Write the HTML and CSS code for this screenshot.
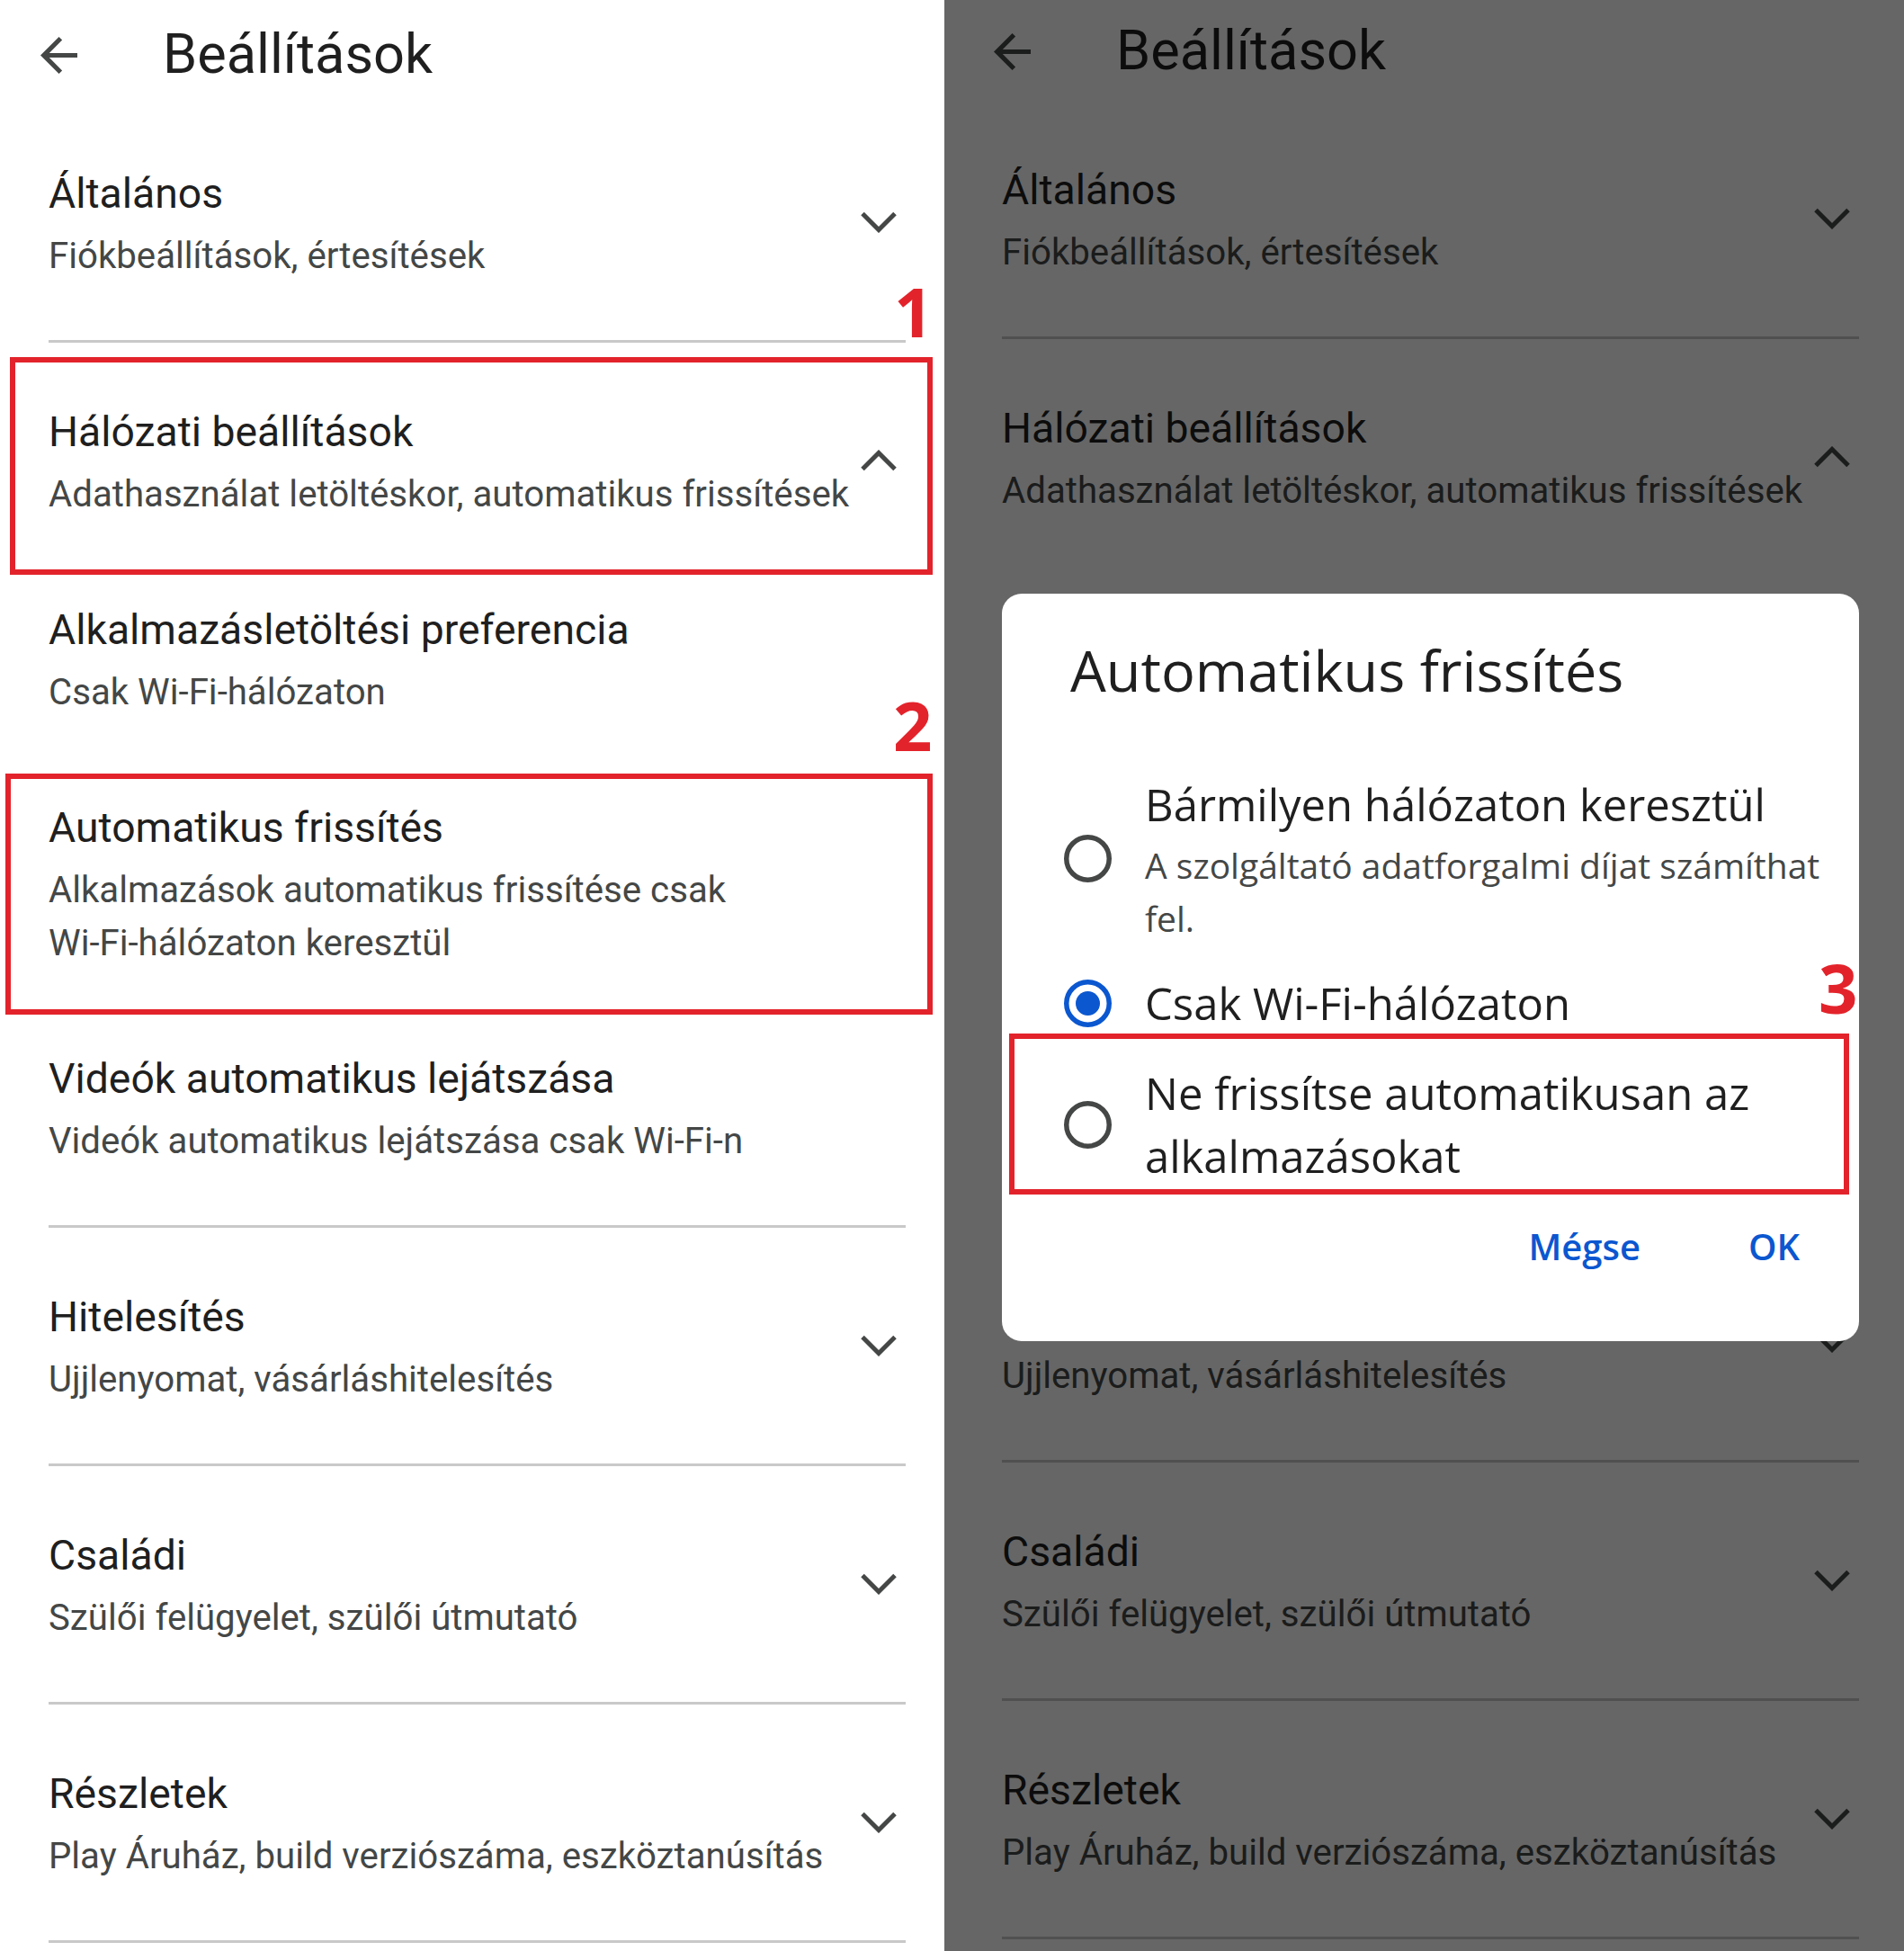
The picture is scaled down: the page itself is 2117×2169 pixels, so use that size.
FILE: index.html
```html
<!DOCTYPE html>
<html lang="hu">
<head>
<meta charset="utf-8">
<title>Beállítások</title>
<link rel="stylesheet" href="styles.css">
</head>
<body>
<div class="screens">

  <div class="panel">
    <div class="page">
      <header class="appbar">
        <svg class="back" viewBox="4 4 16 16"><path d="M20 11H7.83l5.59-5.59L12 4l-8 8 8 8 1.41-1.41L7.83 13H20v-2z"/></svg>
        <h1 class="appbar-title">Beállítások</h1>
      </header>

      <section class="group">
        <div class="row">
          <div class="text">
            <div class="title">Általános</div>
            <div class="sub">Fiókbeállítások, értesítések</div>
          </div>
          <svg class="chev" viewBox="0 0 40 24"><polyline points="2,2.5 20,20.5 38,2.5"/></svg>
        </div>
      </section>
      <div class="divider"></div>

      <section class="group group--open">
        <div class="row">
          <div class="text">
            <div class="title">Hálózati beállítások</div>
            <div class="sub">Adathasználat letöltéskor, automatikus frissítések</div>
          </div>
          <svg class="chev" viewBox="0 0 40 24"><polyline points="2,21.5 20,3.5 38,21.5"/></svg>
        </div>
        <div class="text">
          <div class="title">Alkalmazásletöltési preferencia</div>
          <div class="sub">Csak <span class="nowrap">Wi-Fi-hálózaton</span></div>
        </div>
        <div class="text">
          <div class="title">Automatikus frissítés</div>
          <div class="sub sub--wrap">Alkalmazások automatikus frissítése csak <span class="nowrap">Wi-Fi-hálózaton</span> keresztül</div>
        </div>
        <div class="text">
          <div class="title">Videók automatikus lejátszása</div>
          <div class="sub">Videók automatikus lejátszása csak <span class="nowrap">Wi-Fi-n</span></div>
        </div>
      </section>
      <div class="divider"></div>

      <section class="group">
        <div class="row">
          <div class="text">
            <div class="title">Hitelesítés</div>
            <div class="sub">Ujjlenyomat, vásárláshitelesítés</div>
          </div>
          <svg class="chev" viewBox="0 0 40 24"><polyline points="2,2.5 20,20.5 38,2.5"/></svg>
        </div>
      </section>
      <div class="divider"></div>

      <section class="group">
        <div class="row">
          <div class="text">
            <div class="title">Családi</div>
            <div class="sub">Szülői felügyelet, szülői útmutató</div>
          </div>
          <svg class="chev" viewBox="0 0 40 24"><polyline points="2,2.5 20,20.5 38,2.5"/></svg>
        </div>
      </section>
      <div class="divider"></div>

      <section class="group">
        <div class="row">
          <div class="text">
            <div class="title">Részletek</div>
            <div class="sub">Play Áruház, build verziószáma, eszköztanúsítás</div>
          </div>
          <svg class="chev" viewBox="0 0 40 24"><polyline points="2,2.5 20,20.5 38,2.5"/></svg>
        </div>
      </section>
      <div class="divider"></div>
    </div>

    <div class="mark-box mark-box--1"></div>
    <div class="mark-box mark-box--2"></div>
    <span class="mark-num mark-num--1">1</span>
    <span class="mark-num mark-num--2">2</span>
  </div>

  <div class="panel panel--right">
    <div class="page">
      <header class="appbar">
        <svg class="back" viewBox="4 4 16 16"><path d="M20 11H7.83l5.59-5.59L12 4l-8 8 8 8 1.41-1.41L7.83 13H20v-2z"/></svg>
        <h1 class="appbar-title">Beállítások</h1>
      </header>

      <section class="group">
        <div class="row">
          <div class="text">
            <div class="title">Általános</div>
            <div class="sub">Fiókbeállítások, értesítések</div>
          </div>
          <svg class="chev" viewBox="0 0 40 24"><polyline points="2,2.5 20,20.5 38,2.5"/></svg>
        </div>
      </section>
      <div class="divider"></div>

      <section class="group group--open">
        <div class="row">
          <div class="text">
            <div class="title">Hálózati beállítások</div>
            <div class="sub">Adathasználat letöltéskor, automatikus frissítések</div>
          </div>
          <svg class="chev" viewBox="0 0 40 24"><polyline points="2,21.5 20,3.5 38,21.5"/></svg>
        </div>
        <div class="text covered">
          <div class="title">Alkalmazásletöltési preferencia</div>
          <div class="sub">Csak <span class="nowrap">Wi-Fi-hálózaton</span></div>
        </div>
        <div class="text covered">
          <div class="title">Automatikus frissítés</div>
          <div class="sub sub--wrap">Alkalmazások automatikus frissítése csak <span class="nowrap">Wi-Fi-hálózaton</span> keresztül</div>
        </div>
        <div class="text covered">
          <div class="title">Videók automatikus lejátszása</div>
          <div class="sub">Videók automatikus lejátszása csak <span class="nowrap">Wi-Fi-n</span></div>
        </div>
      </section>
      <div class="divider"></div>

      <section class="group">
        <div class="row">
          <div class="text">
            <div class="title covered">Hitelesítés</div>
            <div class="sub">Ujjlenyomat, vásárláshitelesítés</div>
          </div>
          <svg class="chev" viewBox="0 0 40 24"><polyline points="2,2.5 20,20.5 38,2.5"/></svg>
        </div>
      </section>
      <div class="divider"></div>

      <section class="group">
        <div class="row">
          <div class="text">
            <div class="title">Családi</div>
            <div class="sub">Szülői felügyelet, szülői útmutató</div>
          </div>
          <svg class="chev" viewBox="0 0 40 24"><polyline points="2,2.5 20,20.5 38,2.5"/></svg>
        </div>
      </section>
      <div class="divider"></div>

      <section class="group">
        <div class="row">
          <div class="text">
            <div class="title">Részletek</div>
            <div class="sub">Play Áruház, build verziószáma, eszköztanúsítás</div>
          </div>
          <svg class="chev" viewBox="0 0 40 24"><polyline points="2,2.5 20,20.5 38,2.5"/></svg>
        </div>
      </section>
      <div class="divider"></div>
    </div>

    <div class="scrim"></div>

    <div class="dialog">
      <h2 class="dialog-title">Automatikus frissítés</h2>
      <div class="options">
        <div class="option">
          <svg class="radio" viewBox="0 0 53 53"><circle class="ring" cx="26.5" cy="26.5" r="23.75"/></svg>
          <div class="opt-text">
            <div class="opt-title">Bármilyen hálózaton keresztül</div>
            <div class="opt-sub">A szolgáltató adatforgalmi díjat számíthat fel.</div>
          </div>
        </div>
        <div class="option">
          <svg class="radio radio--on" viewBox="0 0 53 53"><circle class="ring" cx="26.5" cy="26.5" r="23.75"/><circle class="dot" cx="26.5" cy="26.5" r="13.5"/></svg>
          <div class="opt-text">
            <div class="opt-title">Csak <span class="nowrap">Wi-Fi-hálózaton</span></div>
          </div>
        </div>
        <div class="option">
          <svg class="radio" viewBox="0 0 53 53"><circle class="ring" cx="26.5" cy="26.5" r="23.75"/></svg>
          <div class="opt-text">
            <div class="opt-title">Ne frissítse automatikusan az alkalmazásokat</div>
          </div>
        </div>
      </div>
      <div class="actions">
        <span class="btn">Mégse</span>
        <span class="btn">OK</span>
      </div>
    </div>

    <div class="mark-box mark-box--3"></div>
    <span class="mark-num mark-num--3">3</span>
  </div>

</div>
</body>
</html>
```

FILE: styles.css
```css
* { box-sizing: border-box; }

body {
  margin: 0;
  width: 2117px;
  height: 2169px;
  overflow: hidden;
  font-family: Roboto, "Noto Sans", "Liberation Sans", sans-serif;
  background: #fff;
}

.screens {
  display: flex;
  height: 2169px;
}

.panel {
  position: relative;
  width: 1050px;
  height: 2169px;
  flex: none;
  background: #fff;
  overflow: hidden;
  padding: 0 43px 0 54px;
}

.panel--right {
  width: 1067px;
  padding: 0 50px 0 64px;
}

.panel--right .page {
  margin-top: -4px;
}

.covered {
  visibility: hidden;
}

/* App bar */
.appbar {
  height: 116px;
  padding-top: 6px;
  display: flex;
  align-items: center;
  margin-left: -9px;
}

.back {
  width: 41px;
  height: 41px;
  flex: none;
  fill: #444746;
}

.appbar-title {
  margin: 0 0 0 95px;
  font-size: 61.3px;
  font-weight: 400;
  line-height: 1.2;
  color: #1f1f1f;
}

/* List */
.group {
  padding: 71px 0 64px;
}

.group--open {
  display: flex;
  flex-direction: column;
  gap: 93px;
}

.row {
  display: flex;
  align-items: center;
}

.text {
  flex: 1;
  min-width: 0;
}

.title {
  font-size: 46.3px;
  line-height: 56px;
  color: #1f1f1f;
  white-space: nowrap;
}

.sub {
  margin-top: 12px;
  font-size: 40.2px;
  line-height: 59px;
  color: #444746;
  white-space: nowrap;
}

.sub--wrap {
  white-space: normal;
  max-width: 900px;
}

.nowrap { white-space: nowrap; }

.chev {
  width: 40px;
  height: 24px;
  flex: none;
  margin: 0 10px 8px 0;
  fill: none;
  stroke: #444746;
  stroke-width: 5;
}

.divider {
  height: 3px;
  background: #c9c9c9;
}

/* Annotations */
.mark-box {
  position: absolute;
  border: 6px solid #e3232b;
  z-index: 3;
}

.mark-box--1 { left: 11px; top: 397px; width: 1026px; height: 242px; }
.mark-box--2 { left: 6px; top: 860px; width: 1031px; height: 268px; }
.mark-box--3 { left: 72px; top: 1149px; width: 934px; height: 179px; }

.mark-num {
  position: absolute;
  z-index: 3;
  font-family: "Open Sans", "Liberation Sans", sans-serif;
  font-weight: 700;
  font-size: 76px;
  line-height: 76px;
  color: #e3232b;
}

.mark-num--1 { left: 994px; top: 308px; }
.mark-num--2 { left: 993px; top: 768px; }
.mark-num--3 { left: 972px; top: 1060px; }

/* Scrim + dialog */
.scrim {
  position: absolute;
  inset: 0;
  background: rgba(0, 0, 0, 0.6);
  z-index: 1;
}

.dialog {
  position: absolute;
  left: 64px;
  top: 660px;
  width: 953px;
  z-index: 2;
  background: #fff;
  border-radius: 22px;
  padding: 45px 0 75px;
  font-family: "Open Sans", "Noto Sans", sans-serif;
}

.dialog-title {
  margin: 0 0 74px 76px;
  font-size: 63px;
  font-weight: 400;
  line-height: 80px;
  color: #1f1f1f;
}

.options {
  display: flex;
  flex-direction: column;
  gap: 30px;
  padding-left: 69px;
}

.option {
  display: flex;
  align-items: center;
  gap: 37px;
}

.radio {
  width: 53px;
  height: 53px;
  flex: none;
}

.radio .ring {
  fill: none;
  stroke: #444746;
  stroke-width: 5.5;
}

.radio--on .ring { stroke: #0b57d0; }
.radio--on .dot { fill: #0b57d0; }

.opt-text {
  width: 780px;
}

.opt-title {
  font-size: 49px;
  line-height: 70px;
  color: #1f1f1f;
}

.opt-sub {
  margin-top: 3px;
  font-size: 39px;
  line-height: 59px;
  color: #444746;
}

.actions {
  display: flex;
  justify-content: flex-end;
  gap: 120px;
  margin-top: 36px;
  padding-right: 66px;
}

.btn {
  font-size: 40px;
  font-weight: 600;
  line-height: 60px;
  color: #0b57d0;
}
```
